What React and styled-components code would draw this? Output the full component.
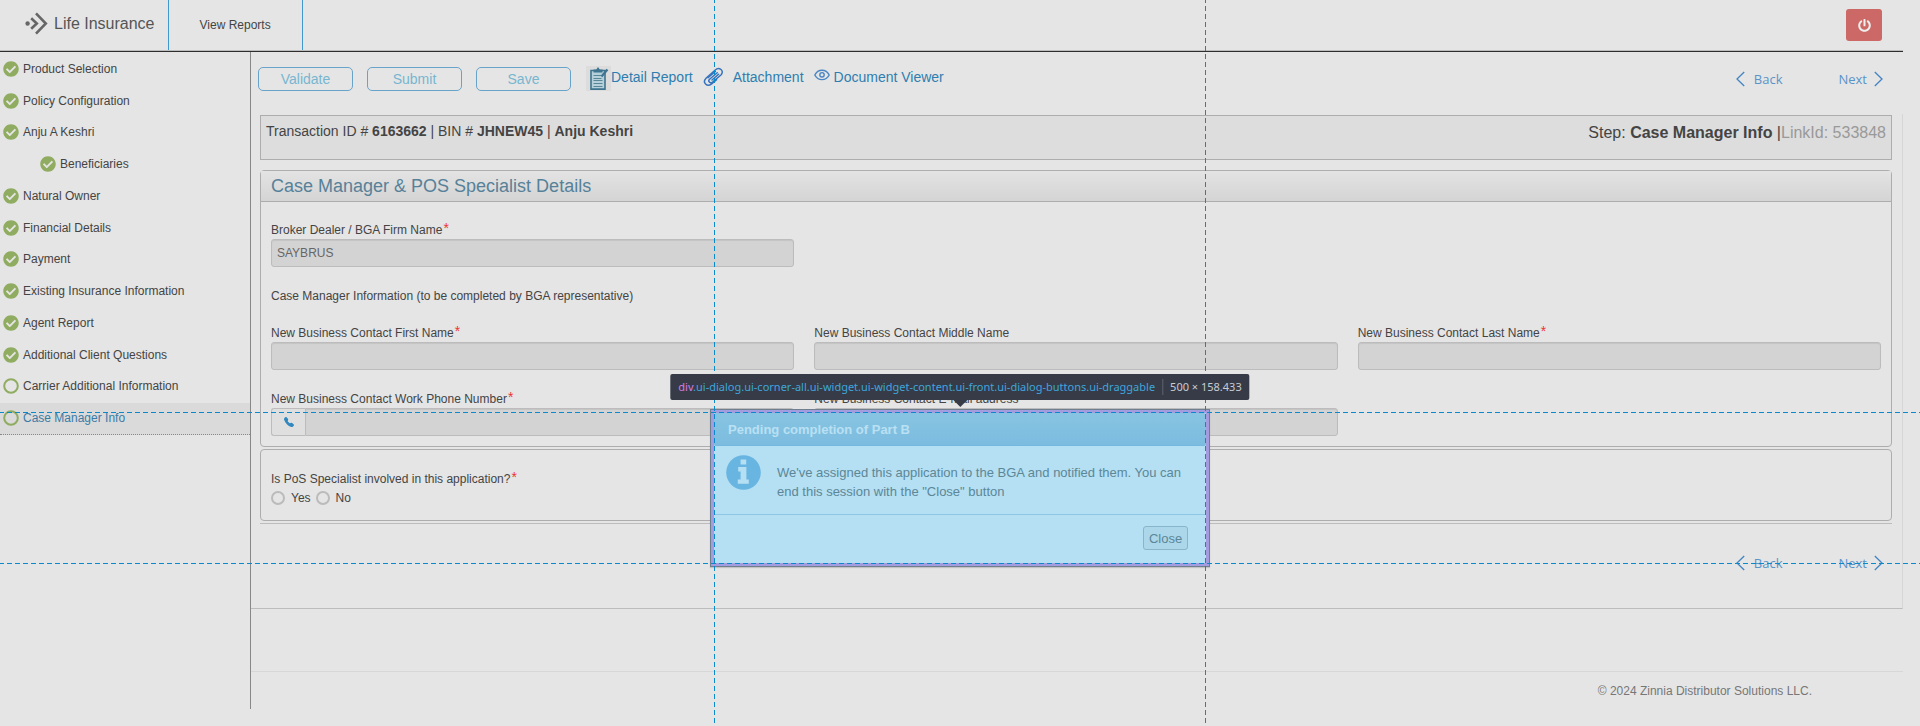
import React from "react";
import styled, { createGlobalStyle } from "styled-components";
import { FaCheckCircle, FaPowerOff } from "react-icons/fa";
import { BsTelephoneFill } from "react-icons/bs";

const GlobalStyle = createGlobalStyle`
  *, *::before, *::after { box-sizing: border-box; }
  body {
    margin: 0;
    background: #e5e5e5;
    color: #444;
    font: 12px/17px "Liberation Sans", Arial, sans-serif;
  }
  a { text-decoration: none; }
  input, button { font-family: inherit; }
`;

const Page = styled.div`
  position: relative;
  min-height: 100vh;
  padding-right: 17px;
  overflow: hidden;
`;

const Header = styled.header`
  display: flex;
  align-items: stretch;
  height: 52px;
  border-bottom: 1px solid #2e2e2e;
  box-shadow: inset 0 -1px 0 #bdbdbd;
`;

const Brand = styled.a`
  display: flex;
  align-items: center;
  gap: 6px;
  padding: 0 13px 4px 25px;
  margin-bottom: 1px;
  border-right: 1px solid #4098cc;
  color: #555;
  font-size: 16px;
`;

const HeaderLink = styled.a`
  display: flex;
  align-items: center;
  padding: 0 31px;
  margin-bottom: 1px;
  border-right: 1px solid #4098cc;
  color: #444;
`;

const PowerButton = styled.button`
  display: flex;
  align-items: center;
  justify-content: center;
  width: 36px;
  height: 32px;
  margin: 9px 21px 0 auto;
  border: 0;
  border-radius: 3px;
  background: #cc6966;
  color: #eee;
`;

const Body = styled.div`
  display: flex;
  align-items: stretch;
`;

const Sidebar = styled.nav`
  flex: none;
  width: 251px;
  border-right: 1px solid #888;
`;

const Steps = styled.ul`
  display: grid;
  grid-auto-rows: 1fr;
  height: 383px;
  margin: 0;
  padding: 2px 0 0;
  list-style: none;
`;

const StepLink = styled.a`
  display: flex;
  align-items: center;
  gap: 4px;
  height: 100%;
  padding-left: ${(p) => (p.$nested ? 40 : 3)}px;
  color: ${(p) => (p.$active ? "#3a7ca6" : "#444")};
  background: ${(p) => (p.$active ? "#dadada" : "transparent")};
  border-bottom: 1px dotted ${(p) => (p.$active ? "#888" : "transparent")};
  svg { flex: none; margin-bottom: 1px; color: #8fac61; }
`;

const Main = styled.main`
  flex: 1;
  min-width: 0;
`;

const Toolbar = styled.div`
  display: flex;
  align-items: flex-start;
  height: 62px;
  padding: 15px 20px 0 7px;
`;

const ActionButton = styled.button`
  width: 95px;
  height: 24px;
  margin-right: 14px;
  padding: 0;
  border: 1px solid #68a3c9;
  border-radius: 5px;
  background: transparent;
  color: #78b6d0;
  font-size: 14px;
`;

const ToolLinks = styled.div`
  display: flex;
  gap: 10px;
  margin-left: 1px;
`;

const ToolLink = styled.a`
  display: flex;
  align-items: center;
  gap: ${(p) => p.$gap || 0}px;
  height: 20px;
  color: #2f7eb0;
  font-size: 14px;
`;

const StepNav = styled.div`
  display: flex;
  gap: 56px;
  margin-left: auto;
`;

const StepNavLink = styled.a`
  display: flex;
  align-items: center;
  gap: ${(p) => (p.$back ? 9 : 7)}px;
  height: 24px;
  color: #5a93c8;
  font: 400 13px/17px "Open Sans", "Noto Sans", sans-serif;
`;

const Content = styled.div`
  padding: 1px 10px 0 9px;
  border-right: 1px solid #d6d6d6;
  border-bottom: 1px solid #bcbcbc;
`;

const InfoBar = styled.div`
  display: flex;
  justify-content: space-between;
  height: 45px;
  padding: 7px 5px;
  margin-bottom: 10px;
  border: 1px solid #adadad;
  background: #ddd;
`;

const Transaction = styled.div`
  font-size: 14px;
`;

const StepInfo = styled.div`
  font-size: 16px;
  line-height: 20px;
  span { color: #999; }
`;

const Panel = styled.section`
  margin-bottom: 2px;
  border: 1px solid #adadad;
  border-radius: 4px;
`;

const PanelTitle = styled.h2`
  margin: 0;
  height: 31px;
  padding: 0 10px;
  border-bottom: 1px solid #adadad;
  background: linear-gradient(#e3e3e3, #d4d4d4);
  color: #578199;
  font-size: 18px;
  font-weight: 400;
  line-height: 30px;
`;

const PanelBody = styled.div`
  display: grid;
  grid-template-columns: repeat(3, 1fr);
  gap: 20px;
  padding: 19px 10px 10px;
`;

const Note = styled.p`
  grid-column: 1 / -1;
  margin: 0;
  padding-top: 2px;
  line-height: 15px;
`;

const Field = styled.div`
  grid-column: ${(p) => (p.$wide ? "1 / -1" : "auto")};
  width: ${(p) => (p.$wide ? "calc((100% - 40px) / 3)" : "auto")};
  label { display: block; height: 18px; line-height: 18px; }
`;

const Required = styled.span`
  margin-left: 1px;
  color: #e33;
  font-size: 14px;
  line-height: 0;
  vertical-align: 1px;
`;

const Input = styled.input`
  display: block;
  width: 100%;
  height: 28px;
  padding: 0 5px;
  border: 1px solid #bcbcbc;
  border-radius: ${(p) => (p.$grouped ? "0 3px 3px 0" : "3px")};
  background: #d3d3d3;
  box-shadow: inset 0 1px 1px rgba(0, 0, 0, 0.07);
  color: #666;
  font-size: 12px;
`;

const InputGroup = styled.div`
  display: flex;
`;

const Addon = styled.span`
  flex: none;
  display: flex;
  align-items: center;
  justify-content: center;
  width: 34px;
  border: 1px solid #bcbcbc;
  border-right: 0;
  border-radius: 3px 0 0 3px;
  background: #dfdfdf;
  color: #3188c0;
`;

const Question = styled.fieldset`
  height: 72px;
  margin: 0 0 2px;
  padding: 20px 10px 0;
  border: 1px solid #adadad;
  border-radius: 4px;
`;

const Prompt = styled.div`
  line-height: 18px;
`;

const Choices = styled.div`
  display: flex;
  gap: 5px;
`;

const Choice = styled.label`
  display: flex;
  align-items: center;
  gap: 6px;
  height: 20px;
  input {
    appearance: none;
    width: 14px;
    height: 14px;
    margin: 0;
    border: 2px solid #bbb;
    border-radius: 50%;
    background: transparent;
  }
`;

const BottomBar = styled.div`
  display: flex;
  height: 85px;
  padding: 27px 9px 0 0;
  border-top: 1px solid #bcbcbc;
`;

const Footer = styled.footer`
  height: 38px;
  margin-top: 62px;
  padding: 11px 91px 0 0;
  border-top: 1px solid #d7d7d7;
  color: #777;
  text-align: right;
`;

const Guide = styled.i`
  position: absolute;
  pointer-events: none;
  ${(p) =>
    p.$vertical
      ? "top: -500px; height: 1400px; width: 1px; background: repeating-linear-gradient(#0a8acb 0 5px, transparent 5px 8px);"
      : "left: -1000vw; width: 2000vw; height: 1px; background: repeating-linear-gradient(90deg, #0a8acb 0 5px, transparent 5px 8px);"}
`;

const Dialog = styled.div`
  position: absolute;
  top: 409px;
  left: 50%;
  width: 500px;
  margin-left: -250px;
  border: 1px solid #6f7f8f;
  background: #b5dff2;
  box-shadow: inset 0 0 0 3px #a39ddf, 0 1px 1px rgba(0, 0, 0, 0.15);
  padding: 3px;
`;

const TopGuide = styled(Guide)`
  top: 2px;
`;
const BottomGuide = styled(Guide)`
  bottom: 2px;
`;
const LeftGuide = styled(Guide)`
  left: 3px;
`;
const RightGuide = styled(Guide)`
  right: 3px;
`;

const DialogTitle = styled.h3`
  margin: 0;
  height: 33px;
  padding: 0 14px;
  border-bottom: 1px solid #74b7df;
  border-radius: 2px;
  background: linear-gradient(#88c4e2, #7cbcdf);
  color: #b9e0f3;
  font-size: 13px;
  line-height: 34px;
`;

const DialogMessage = styled.div`
  display: flex;
  gap: 16px;
  height: 69px;
  padding: 9px 10px 0 12px;
  border-bottom: 1px solid #8ec7e6;
  color: #5b8798;
  font-size: 13px;
  line-height: 19px;
  svg { flex: none; }
  p { margin: 8px 0 0; }
`;

const DialogButtons = styled.div`
  display: flex;
  justify-content: flex-end;
  height: 48px;
  padding: 11px 18px 0;
`;

const CloseButton = styled.button`
  width: 45px;
  height: 24px;
  padding: 0;
  border: 1px solid #89b5ca;
  border-radius: 3px;
  background: #acd6e9;
  color: #5b8798;
  font-size: 13px;
`;

const Tooltip = styled.div`
  position: absolute;
  bottom: calc(100% + 10px);
  left: 50%;
  transform: translateX(-50%);
  display: flex;
  align-items: center;
  height: 26px;
  padding: 0 8px;
  border-radius: 2px;
  background: #363b47;
  color: #3fa5dc;
  font: 11px/16px "Noto Sans", "Open Sans", sans-serif;
  white-space: nowrap;
  b { color: #d57be8; font-weight: 400; }
  &::after {
    content: "";
    position: absolute;
    top: 100%;
    left: 50%;
    margin-left: -7px;
    border: 7px solid transparent;
    border-top-color: #363b47;
    border-bottom: 0;
  }
`;

const Size = styled.span`
  margin-left: 7px;
  padding-left: 7px;
  border-left: 1px solid #5d6370;
  color: #c9ccd3;
`;

const LogoMark = () => (
  <svg width="23" height="23" viewBox="0 0 23 23" fill="none" stroke="#666" strokeWidth="2.6" aria-hidden="true">
    <circle cx="2.6" cy="11.5" r="2.2" fill="#666" stroke="none" />
    <path d="M6.2 6.2l5.6 5.3-5.6 5.3M11 1.4L20.8 11.5 11 21.6" />
  </svg>
);

const OpenCircle = () => (
  <svg width="16" height="16" viewBox="0 0 16 16" fill="none" aria-hidden="true">
    <circle cx="8" cy="8" r="6.8" stroke="#8fac61" strokeWidth="2" />
  </svg>
);

const ClipboardMark = styled.svg`
  flex: none;
  margin-top: 3px;
`;

const ClipboardIcon = () => (
  <ClipboardMark width="25" height="25" viewBox="0 0 25 25" aria-hidden="true">
    <path fill="#dcdcdc" d="M0 0h25v25H0z" />
    <path fill="#b5d0da" stroke="#3e7490" strokeWidth="1.6" d="M5 4.5h14v18.6H5z" />
    <path fill="#3e7490" d="M7.5 6.5V3.4h2.8L12 1l1.8 2.4h2.7v3.1z" />
    <path stroke="#5a8798" d="M7.5 9.5h8M7.5 12.5h8M7.5 14.5h9M7.5 17.5h9M7.5 20.5h9" />
    <path stroke="#3e7490" strokeWidth="2.2" d="M21.5 3.5l-6 7" />
  </ClipboardMark>
);

const PaperclipIcon = () => (
  <svg width="21" height="20" viewBox="0 0 21 20" fill="none" stroke="#3673bd" strokeWidth="1.5" strokeLinecap="round" aria-hidden="true">
    <path d="M13.6 12.6l-5 4.2c-4.6 3.6-9.6-1.4-5.6-5.6L12.200 3c4-3.600 9.400.6 6 4.800L9.600 15c-2.600 2-5-.8-3-2.800l7.600-6.400" />
    <path d="M15.600 7.200l-6.600 5.800M5 10.800l7.400-6.400" />
  </svg>
);

const EyeMark = styled.svg`
  flex: none;
  margin-bottom: 5px;
`;

const EyeIcon = () => (
  <EyeMark width="16" height="12" viewBox="0 0 16 12" fill="none" stroke="#4a86c4" strokeWidth="1.4" aria-hidden="true">
    <path d="M.8 6C4 -.4 12 -.4 15.2 6 12 12.2 4 12.2.8 6z" />
    <circle cx="8" cy="5.8" r="2.2" />
  </EyeMark>
);

const InfoIcon = () => (
  <svg width="35" height="35" viewBox="0 0 35 35" aria-hidden="true">
    <circle cx="17.500" cy="17.500" r="17.300" fill="#69b5e2" />
    <path fill="#b5dff2" d="M14.600 4.600h5.600v5h-5.600zM12.200 12h8.200v12.400h2.400v4.400H11.800v-4.400h2.800v-8h-2.400z" />
  </svg>
);

const Chevron = ({ left }) => (
  <svg width="9" height="16" viewBox="0 0 9 16" fill="none" stroke="#4284c2" strokeWidth="1.3" aria-hidden="true">
    <path d={left ? "M8.2 1L1 8l7.2 7" : "M.8 1L8 8 .8 15"} />
  </svg>
);

const steps = [
  { name: "Product Selection", done: true },
  { name: "Policy Configuration", done: true },
  { name: "Anju A Keshri", done: true },
  { name: "Beneficiaries", done: true, nested: true },
  { name: "Natural Owner", done: true },
  { name: "Financial Details", done: true },
  { name: "Payment", done: true },
  { name: "Existing Insurance Information", done: true },
  { name: "Agent Report", done: true },
  { name: "Additional Client Questions", done: true },
  { name: "Carrier Additional Information" },
  { name: "Case Manager Info", active: true },
];

const PrevNext = () => (
  <StepNav>
    <StepNavLink href="#back" $back>
      <Chevron left />
      Back
    </StepNavLink>
    <StepNavLink href="#next">
      Next
      <Chevron />
    </StepNavLink>
  </StepNav>
);

const TextField = ({ id, label, required, value = "", wide, icon }) => (
  <Field $wide={wide}>
    <label htmlFor={id}>
      {label}
      {required && <Required>*</Required>}
    </label>
    {icon ? (
      <InputGroup>
        <Addon>{icon}</Addon>
        <Input id={id} defaultValue={value} disabled $grouped />
      </InputGroup>
    ) : (
      <Input id={id} defaultValue={value} disabled />
    )}
  </Field>
);

export default function App() {
  return (
    <Page>
      <GlobalStyle />
      <Header>
        <Brand href="#home">
          <LogoMark />
          Life Insurance
        </Brand>
        <HeaderLink href="#reports">View Reports</HeaderLink>
        <PowerButton aria-label="Log out">
          <FaPowerOff size={13} />
        </PowerButton>
      </Header>
      <Body>
        <Sidebar>
          <Steps>
            {steps.map((s) => (
              <li key={s.name}>
                <StepLink href="#step" $nested={s.nested} $active={s.active}>
                  {s.done ? <FaCheckCircle size={16} /> : <OpenCircle />}
                  {s.name}
                </StepLink>
              </li>
            ))}
          </Steps>
        </Sidebar>
        <Main>
          <Toolbar>
            <ActionButton>Validate</ActionButton>
            <ActionButton>Submit</ActionButton>
            <ActionButton>Save</ActionButton>
            <ToolLinks>
              <ToolLink href="#detail">
                <ClipboardIcon />
                Detail Report
              </ToolLink>
              <ToolLink href="#attachment" $gap={9}>
                <PaperclipIcon />
                Attachment
              </ToolLink>
              <ToolLink href="#documents" $gap={4}>
                <EyeIcon />
                Document Viewer
              </ToolLink>
            </ToolLinks>
            <PrevNext />
          </Toolbar>
          <Content>
            <InfoBar>
              <Transaction>
                Transaction ID # <strong>6163662</strong> | BIN # <strong>JHNEW45</strong> | <strong>Anju Keshri</strong>
              </Transaction>
              <StepInfo>
                Step: <strong>Case Manager Info </strong>|<span>LinkId: 533848</span>
              </StepInfo>
            </InfoBar>
            <Panel>
              <PanelTitle>Case Manager &amp; POS Specialist Details</PanelTitle>
              <PanelBody>
                <TextField id="firm" label="Broker Dealer / BGA Firm Name" value="SAYBRUS" required wide />
                <Note>Case Manager Information (to be completed by BGA representative)</Note>
                <TextField id="first" label="New Business Contact First Name" required />
                <TextField id="middle" label="New Business Contact Middle Name" />
                <TextField id="last" label="New Business Contact Last Name" required />
                <TextField id="phone" label="New Business Contact Work Phone Number" required icon={<BsTelephoneFill size={10} />} />
                <TextField id="email" label="New Business Contact E-mail address" />
              </PanelBody>
            </Panel>
            <Question aria-labelledby="pos-prompt">
              <Prompt id="pos-prompt">
                Is PoS Specialist involved in this application?<Required>*</Required>
              </Prompt>
              <Choices>
                <Choice>
                  <input type="radio" name="pos" /> Yes
                </Choice>
                <Choice>
                  <input type="radio" name="pos" /> No
                </Choice>
              </Choices>
            </Question>
            <BottomBar>
              <PrevNext />
            </BottomBar>
          </Content>
          <Footer>© 2024 Zinnia Distributor Solutions LLC.</Footer>
        </Main>
      </Body>
      <Dialog role="dialog" aria-labelledby="dialog-title">
        <DialogTitle id="dialog-title">Pending completion of Part B</DialogTitle>
        <DialogMessage>
          <InfoIcon />
          <p>We've assigned this application to the BGA and notified them. You can end this session with the "Close" button</p>
        </DialogMessage>
        <DialogButtons>
          <CloseButton>Close</CloseButton>
        </DialogButtons>
        <TopGuide />
        <BottomGuide />
        <LeftGuide $vertical />
        <RightGuide $vertical />
        <Tooltip role="tooltip">
          <span>
            <b>div</b>.ui-dialog.ui-corner-all.ui-widget.ui-widget-content.ui-front.ui-dialog-buttons.ui-draggable
          </span>
          <Size>500 × 158.433</Size>
        </Tooltip>
      </Dialog>
    </Page>
  );
}
